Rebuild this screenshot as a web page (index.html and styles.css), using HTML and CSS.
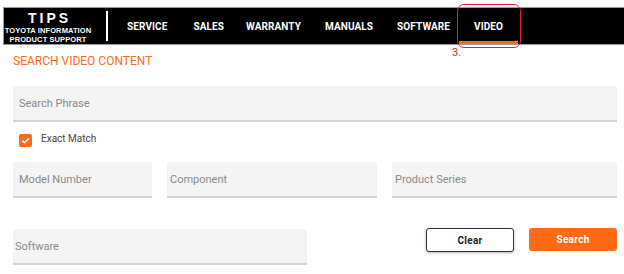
FILE: index.html
```html
<!DOCTYPE html>
<html>
<head>
  <meta name="viewport" content="width=device-width, initial-scale=1">
  <link rel="stylesheet" href="styles.css">
</head>
<body>
  <div class="topbar">
    <div class="logo">
      <div class="logo-big">TIPS</div>
      <div class="logo-small">TOYOTA INFORMATION<br>PRODUCT SUPPORT</div>
    </div>
    <div class="divider"></div>
    <nav class="nav">
      <a class="nav-item">SERVICE</a>
      <a class="nav-item">SALES</a>
      <a class="nav-item">WARRANTY</a>
      <a class="nav-item">MANUALS</a>
      <a class="nav-item">SOFTWARE</a>
      <a class="nav-item active">VIDEO</a>
    </nav>
  </div>

  <div class="callout"></div>
  <div class="callout-num">3.</div>

  <div class="content">
    <h1 class="title">SEARCH VIDEO CONTENT</h1>

    <div class="field">Search Phrase</div>

    <label class="check-row">
      <span class="checkbox">
        <svg width="9" height="9" viewBox="0 0 9 9"><path d="M1.3 4.6 L3.6 6.8 L7.8 2.2" fill="none" stroke="#fff" stroke-width="1.5"/></svg>
      </span>
      <span class="check-label">Exact Match</span>
    </label>

    <div class="row-3">
      <div class="field">Model Number</div>
      <div class="field tight">Component</div>
      <div class="field tight">Product Series</div>
    </div>

    <div class="row-last">
      <div class="field tighter software">Software</div>
      <div class="buttons">
        <button class="btn btn-clear">Clear</button>
        <button class="btn btn-search">Search</button>
      </div>
    </div>
  </div>
</body>
</html>
```

FILE: styles.css
```css
body {
  margin: 0;
  font-family: Roboto, "Liberation Sans", Arial, sans-serif;
  background: #fff;
  position: relative;
}

.topbar {
  margin: 7px 0 0 3px;
  height: 36px;
  background: #000;
  border: 1px solid #9a9a9a;
  border-right: none;
  display: flex;
  align-items: center;
}

.logo {
  width: 88px;
  text-align: center;
  color: #fff;
  font-family: "Liberation Sans", Arial, sans-serif;
  font-weight: bold;
  margin-top: 2px;
}
.logo-big {
  font-size: 14px;
  line-height: 16px;
  letter-spacing: 3px;
  padding-left: 3px;
}
.logo-small {
  font-size: 7.5px;
  line-height: 9px;
  letter-spacing: 0.1px;
}

.divider {
  width: 2px;
  height: 30px;
  background: #fff;
  margin-left: 14px;
}

.nav {
  display: flex;
  height: 36px;
  margin-left: 7px;
}
.nav-item {
  position: relative;
  height: 36px;
  display: flex;
  align-items: center;
  padding: 0 12px;
  color: #fff;
  font-size: 10px;
  font-weight: bold;
  letter-spacing: 0.1px;
}
.nav-item:first-child { padding-right: 14px; }
.nav-item:nth-child(2) { padding-right: 10px; }
.nav-item.active {
  padding: 0 15px;
  margin-left: -3px;
}
.nav-item.active::after {
  content: "";
  position: absolute;
  left: 0;
  right: 0;
  bottom: 0;
  height: 3px;
  background: #e8731f;
}

.callout {
  position: absolute;
  left: 457px;
  top: 4px;
  width: 62px;
  height: 42px;
  border: 1.5px solid #e5232b;
  border-radius: 7px;
}
.callout-num {
  position: absolute;
  left: 452px;
  top: 46px;
  color: #e5232b;
  font-size: 11px;
  line-height: 13px;
}

.content { padding: 0 7px 0 13px; }

.title {
  margin: 9px 0 0;
  font-size: 12px;
  line-height: 14px;
  font-weight: normal;
  color: #ff6a13;
}

.field {
  box-sizing: border-box;
  height: 36px;
  margin-top: 18px;
  padding-left: 6px;
  display: flex;
  align-items: center;
  background: #f4f4f4;
  border-bottom: 2px solid #d4d4d4;
  border-radius: 3px 3px 0 0;
  color: #8a8a8a;
  font-size: 11px;
}
.field.tight { padding-left: 3px; }
.field.tighter { padding-left: 2px; }

.check-row {
  display: flex;
  align-items: center;
  margin-top: 12px;
  padding-left: 6px;
  height: 13px;
}
.checkbox {
  width: 13px;
  height: 13px;
  border-radius: 2px;
  background: #ff6a13;
  display: flex;
  align-items: center;
  justify-content: center;
}
.check-label {
  margin-left: 9px;
  margin-top: -4px;
  font-size: 10px;
  color: #444;
}

.row-3 {
  display: grid;
  grid-template-columns: 139px 210px 1fr;
  column-gap: 15px;
  margin-top: 15px;
}
.row-3 .field { margin-top: 0; }

.row-last {
  display: flex;
  justify-content: space-between;
  align-items: flex-start;
  margin-top: 31px;
}
.software {
  width: 294px;
  margin-top: 0;
}

.buttons {
  display: flex;
  gap: 15px;
  margin-top: -1px;
}
.btn {
  width: 88px;
  height: 24px;
  border-radius: 3px;
  font-family: Roboto, sans-serif;
  font-size: 10px;
  font-weight: bold;
  letter-spacing: 0.3px;
  cursor: pointer;
}
.btn-clear {
  background: #fff;
  color: #222;
  border: 1px solid #333;
  box-shadow: 0 1px 3px rgba(0, 0, 0, 0.3);
}
.btn-search {
  background: #ff6a13;
  color: #fff;
  border: none;
  height: 23px;
}
```
